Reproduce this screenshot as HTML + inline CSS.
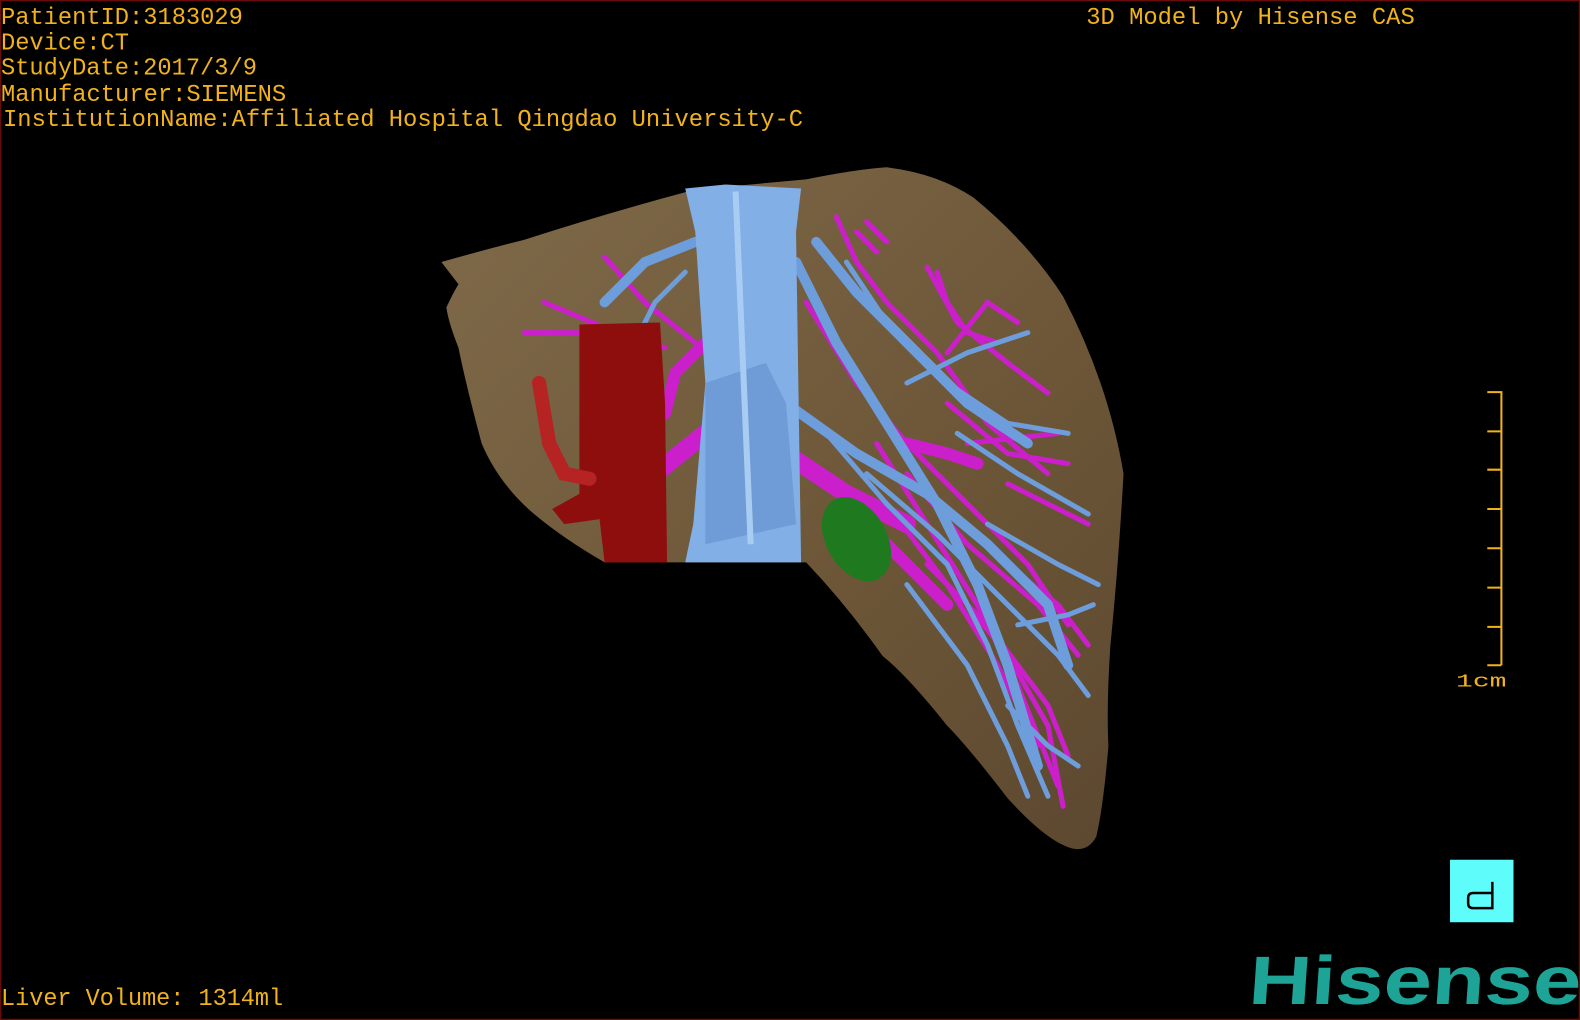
<!DOCTYPE html>
<html><head><meta charset="utf-8"><style>
html,body{margin:0;padding:0;background:#000;width:1580px;height:1020px;overflow:hidden}
svg{position:absolute;left:0;top:0}
</style></head><body>
<svg width="1580" height="1020" viewBox="0 0 1568 1012" preserveAspectRatio="none">
<defs>
<linearGradient id="lg" x1="0" y1="0" x2="1" y2="1">
<stop offset="0" stop-color="#7f6a4a"/><stop offset="0.6" stop-color="#6c5637"/><stop offset="1" stop-color="#5c4830"/>
</linearGradient>
</defs>
<rect x="0.5" y="0.5" width="1567" height="1011" fill="#000" stroke="#6a0c0c" stroke-width="1.5"/>
<path d="M438 260 Q480 248 520 238 Q600 212 690 188 L800 178 Q850 168 880 166 Q930 172 966 196 Q1020 240 1055 294 Q1100 380 1115 470 Q1110 560 1102 640 Q1098 700 1100 740 Q1095 800 1088 830 Q1080 845 1065 842 Q1040 836 1000 792 Q960 740 940 720 Q900 670 876 651 Q840 600 800 558 L600 558 Q560 535 530 510 Q495 480 478 440 Q462 380 455 345 Q445 320 443 305 Q450 290 455 282 Z" fill="url(#lg)"/>
<g fill="none" stroke-linecap="round">
<g stroke="#cc1fcc" stroke-width="5">
<path d="M520 330 L600 330 L660 345"/><path d="M540 300 L600 325"/><path d="M600 255 L640 300 L690 340"/>
<path d="M830 215 L850 260 L880 300 L930 350 L980 420 L1040 470"/><path d="M920 265 L950 320 L1000 360 L1040 390"/>
<path d="M800 300 L850 380 L900 440 L960 500 L1020 560 L1060 620"/><path d="M940 350 L980 300 L1010 320"/>
<path d="M870 440 L920 520 L970 600 L1010 680 L1050 780"/><path d="M900 470 L960 540 L1030 600 L1070 650"/>
<path d="M920 560 L980 620 L1040 700 L1060 750"/><path d="M940 400 L1000 450 L1060 460"/>
<path d="M880 500 L940 580 L990 660 L1030 740"/><path d="M1000 480 L1080 520"/><path d="M960 440 L1050 430"/>
<path d="M850 230 L870 250 M860 220 L880 240"/><path d="M930 270 L940 300 L960 330 L990 340"/>
<path d="M960 600 L1000 650 L1040 720 L1055 800"/><path d="M1000 560 L1050 600 L1080 640"/>
</g>
<g stroke="#cc1fcc" stroke-width="18"><path d="M650 470 L700 430 L780 450 L840 490 L900 520"/></g>
<g stroke="#cc1fcc" stroke-width="12"><path d="M840 500 L900 560 L940 600"/><path d="M900 440 L940 450 L970 460"/><path d="M660 410 L670 370 L700 340"/></g>
<g stroke="#6e9ddc" stroke-width="10">
<path d="M600 300 L640 260 L690 240"/><path d="M810 240 L850 290 L900 340 L960 400 L1020 440"/>
<path d="M790 260 L830 340 L880 420 L930 500 L970 580 L1000 660 L1030 760"/>
<path d="M780 400 L850 450 L920 490 L980 540 L1040 600 L1060 660"/>
</g>
<g stroke="#6e9ddc" stroke-width="5">
<path d="M840 260 L880 320 L940 380 L1000 420 L1060 430"/><path d="M860 470 L930 530 L990 590 L1050 650 L1080 690"/>
<path d="M820 430 L880 500 L940 560 L980 640 L1010 720 L1040 790"/><path d="M900 380 L960 350 L1020 330"/>
<path d="M950 430 L1010 470 L1080 510"/><path d="M980 520 L1050 560 L1090 580"/><path d="M620 360 L650 300 L680 270"/>
<path d="M900 580 L960 660 L1000 740 L1020 790"/><path d="M1000 700 L1040 740 L1070 760"/><path d="M1010 620 L1060 610 L1085 600"/>
</g>
</g>
<ellipse cx="850" cy="535" rx="30" ry="45" fill="#1f7a1f" transform="rotate(-30 850 535)"/>
<path d="M680 187 L720 183 L795 187 L790 230 L795 558 L680 558 L688 520 L700 380 L690 230 Z" fill="#82afe6"/>
<path d="M700 380 L760 360 L780 400 L790 520 L700 540 Z" fill="#6f9cd6"/>
<path d="M730 190 L745 540" stroke="#a9ccf3" stroke-width="6"/>
<path d="M575 322 L655 320 L660 400 L662 558 L600 558 L595 515 L560 520 L548 505 L575 490 Z" fill="#8e0d0d"/>
<path d="M535 380 L545 440 L560 470 L585 475" fill="none" stroke="#b52323" stroke-width="14" stroke-linecap="round"/>
<g font-family="'Liberation Mono',monospace" font-size="24" fill="#f2b21c">
<text x="1" y="24" textLength="240" lengthAdjust="spacingAndGlyphs">PatientID:3183029</text>
<text x="1" y="49" textLength="127" lengthAdjust="spacingAndGlyphs">Device:CT</text>
<text x="1" y="74" textLength="254" lengthAdjust="spacingAndGlyphs">StudyDate:2017/3/9</text>
<text x="1" y="100" textLength="283" lengthAdjust="spacingAndGlyphs">Manufacturer:SIEMENS</text>
<text x="3" y="125" textLength="794" lengthAdjust="spacingAndGlyphs">InstitutionName:Affiliated Hospital Qingdao University-C</text>
<text x="1078" y="24" textLength="326" lengthAdjust="spacingAndGlyphs">3D Model by Hisense CAS</text>
<text x="1" y="997" textLength="280" lengthAdjust="spacingAndGlyphs">Liver Volume: 1314ml</text>
<text x="1445" y="681" font-size="18" textLength="50" lengthAdjust="spacingAndGlyphs">1cm</text>
</g>
<g stroke="#f2b21c" stroke-width="2" fill="none">
<path d="M1490 388 L1490 660"/>
<path d="M1476 389 L1490 389 M1476 428 L1490 428 M1476 466 L1490 466 M1476 505 L1490 505 M1476 544 L1490 544 M1476 583 L1490 583 M1476 622 L1490 622 M1476 660 L1490 660"/>
</g>
<rect x="1439" y="853" width="63" height="62" fill="#5ffcfc"/>
<path d="M1481 875 L1481 901 L1462 901 Q1457 901 1457 896 L1457 891 Q1457 886 1462 886 L1481 886" fill="none" stroke="#000" stroke-width="2.5"/>
<text x="1238" y="996" font-family="'Liberation Sans',sans-serif" font-weight="bold" font-size="68" fill="#1ea397" textLength="330" lengthAdjust="spacingAndGlyphs" transform="skewX(-4)" transform-origin="1238 996">Hisense</text>
</svg>
</body></html>
